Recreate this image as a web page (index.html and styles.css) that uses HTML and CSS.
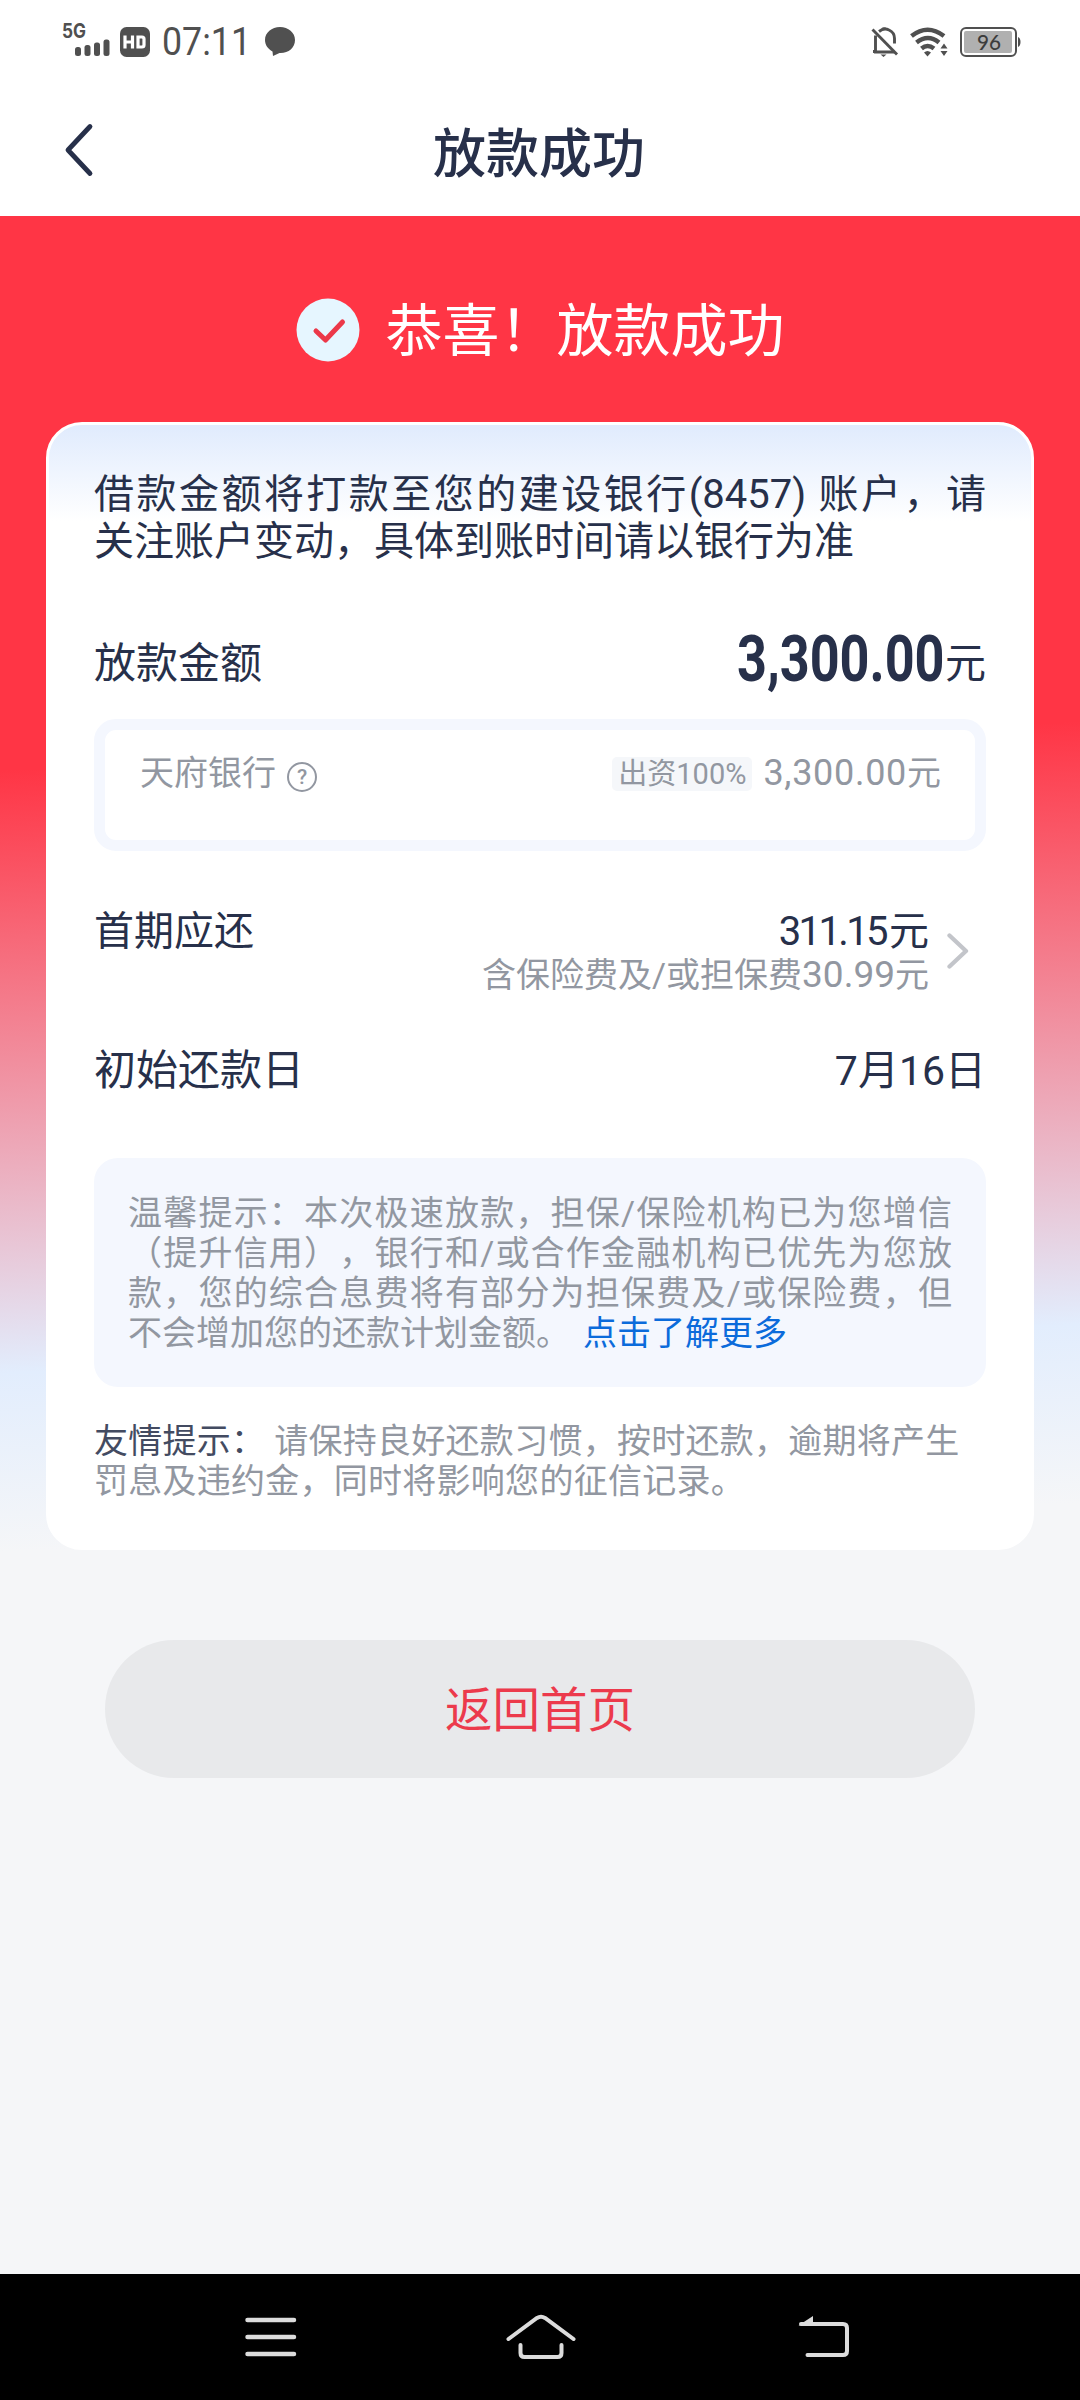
FILE: index.html
```html
<!DOCTYPE html>
<html lang="zh-CN">
<head>
<meta charset="utf-8">
<title>放款成功</title>
<link rel="stylesheet" href="styles.css">
</head>
<body>
<div class="screen">
  <header class="top">
    <div class="status">
      <div class="status-left">
        <svg class="signal" width="49" height="42" viewBox="0 -8 49 42"><text class="net" x="0" y="14" textLength="24" lengthAdjust="spacingAndGlyphs">5G</text><g fill="#505050"><rect x="13" y="23" width="6" height="9" rx="2.5"/><rect x="22.500" y="21" width="6" height="11" rx="2.500"/><rect x="32" y="18.500" width="6" height="13.500" rx="2.500"/><rect x="41.500" y="15.500" width="6" height="16.500" rx="2.500"/></g></svg>
        <svg class="hd" width="30" height="30" viewBox="0 0 30 30"><rect width="30" height="30" rx="6.500" fill="#505050"/><path d="M5 8.500v13M12.500 8.500v13M5 15h8M18 10v10h4q2 0 2-2v-6q0-2-2-2z" fill="none" stroke="#fff" stroke-width="3.200"/></svg>
        <div class="clock"><span class="clock-text">07:11</span></div>
        <svg class="bubble" width="30" height="30" viewBox="0 0 30 30"><path d="M15 0C6.700 0 0 5.600 0 13c0 5 3 9 7.500 11.500L8 29l6.500-3C23 26.500 30 21 30 13 30 5.600 23.300 0 15 0z" fill="#505050"/></svg>
      </div>
      <div class="status-right">
        <svg width="28" height="32" viewBox="0 0 28 32"><g fill="none" stroke="#505050" stroke-width="2.900"><path d="M1.500 3.500L26 28.500"/><path d="M4.500 9.500v16.500h19M2 25.500h3M8 5.500q5-4 10-1.500 5.500 2.500 5.500 8.500v5"/></g><path d="M10 2.500q3-2.500 6 0zM9.500 28.500h6l-3 2.500z" fill="#505050"/></svg>
        <svg class="wifi" width="40" height="30" viewBox="0 0 40 30"><g fill="none" stroke="#505050" stroke-width="4.500"><path d="M1.500 9Q17.500-3.500 34 9"/><path d="M6.500 15.500q11.500-9 22.500 0"/><path d="M11.500 21.500q6-5 12.500 0"/></g><path d="M14 25.500q3.500-3 7 0l-3.500 4z" fill="#505050"/><path d="M30.500 21.500l3.500-5 3.500 5zM30.500 24h7L34 29z" fill="#505050"/></svg>
        <svg class="battery" width="61" height="30" viewBox="0 0 61 30"><rect x="1" y="1" width="55" height="28" rx="5" fill="#fff" stroke="#505050" stroke-width="2"/><rect x="4" y="4" width="48" height="22" rx="2" fill="#b0b0b0"/><path d="M58 10q2.500 1 2.500 5T58 20z" fill="#505050"/><text class="level" x="17" y="22.800" textLength="24" lengthAdjust="spacingAndGlyphs">96</text></svg>
      </div>
    </div>
    <div class="bar">
      <svg class="back" width="30" height="54" viewBox="0 0 30 54"><path d="M26 3.500L4 27l22 23.500" fill="none" stroke="#27304a" stroke-width="4.800" stroke-linecap="round" stroke-linejoin="round"/></svg>
      <h1 class="title">放款成功</h1>
    </div>
  </header>

  <main class="content">
    <div class="success">
      <svg width="64" height="64" viewBox="0 0 64 64"><circle cx="32" cy="32" r="31.500" fill="#e6f6ff"/><path d="M20 33l9.500 9L46.500 24" fill="none" stroke="#ec3849" stroke-width="5" stroke-linecap="round" stroke-linejoin="round"/></svg>
      <span class="success-text">恭喜！放款成功</span>
    </div>

    <section class="card">
      <div class="notice">
        <div class="line full">借款金额将打款至您的建设银行(8457) 账户，请</div>
        <div class="line">关注账户变动，具体到账时间请以银行为准</div>
      </div>
      <div class="row amount-row">
        <span class="label">放款金额</span>
        <div class="amount"><div class="amount-box"><span class="amount-num">3,300.00</span></div><span class="unit">元</span></div>
      </div>
      <div class="funder">
        <span class="bank">天府银行</span>
        <svg class="help" width="32" height="32" viewBox="0 0 32 32"><circle cx="16" cy="16" r="14" fill="none" stroke="#9297a1" stroke-width="2"/><text class="q" x="16" y="23" text-anchor="middle">?</text></svg>
        <span class="tag">出资100%</span>
        <span class="part"><span class="part-num">3,300.00</span>元</span>
      </div>
      <div class="row first-row">
        <span class="label small">首期应还</span>
        <div class="first">
          <div class="first-sum"><span class="first-num">311.15</span>元</div>
          <div class="first-sub">含保险费及/或担保费<span class="sub-num">30.99</span>元</div>
        </div>
        <svg class="arrow" width="22" height="36" viewBox="0 0 22 36"><path d="M2.500 2.500L19 18 2.500 33.500" fill="none" stroke="#c3c5ca" stroke-width="4.300" stroke-linecap="round" stroke-linejoin="round"/></svg>
      </div>
      <div class="row date-row">
        <span class="label">初始还款日</span>
        <span class="date">7月16日</span>
      </div>
      <div class="tip">
        <div class="tip-line full">温馨提示：本次极速放款，担保/保险机构已为您增信</div>
        <div class="tip-line full">（提升信用），银行和/或合作金融机构已优先为您放</div>
        <div class="tip-line full">款，您的综合息费将有部分为担保费及/或保险费，但</div>
        <div class="tip-line">不会增加您的还款计划金额。<a class="more">点击了解更多</a></div>
      </div>
      <div class="friendly">
        <div class="tip-line"><span class="strong">友情提示：</span>请保持良好还款习惯，按时还款，逾期将产生</div>
        <div class="tip-line">罚息及违约金，同时将影响您的征信记录。</div>
      </div>
    </section>

    <button class="home">返回首页</button>
  </main>

  <nav class="nav">
    <svg width="52" height="44" viewBox="0 0 52 44"><path d="M2.500 5h46.500M2.500 22h46.500M2.500 39h46.500" stroke="#dcdcdc" stroke-width="4.500" stroke-linecap="round"/></svg>
    <svg class="nav-home" width="72" height="46" viewBox="0 0 72 46"><path d="M3.500 25L32 4q4-2.500 8 0L68.500 25M15.500 31v8q0 4 4 4h33q4 0 4-4v-8" fill="none" stroke="#dcdcdc" stroke-width="4" stroke-linecap="round"/></svg>
    <svg width="54" height="46" viewBox="0 0 54 46"><path d="M4 10h42q4 0 4 4v23q0 4-4 4H10.500" fill="none" stroke="#dcdcdc" stroke-width="4" stroke-linecap="round"/><path d="M1.500 11.500L16 2v9.500z" fill="#dcdcdc"/></svg>
  </nav>
</div>
</body>
</html>
```
FILE: styles.css
```css
* { box-sizing: border-box; }
body {
  margin: 0;
  font-family: Roboto, "Noto Sans CJK SC", sans-serif;
  color: #27304a;
  text-spacing-trim: space-all;
}
svg { display: block; flex: none; }
.screen {
  width: 1080px;
  height: 2400px;
  display: flex;
  flex-direction: column;
  background: #f5f6f8;
  overflow: hidden;
}
.top { height: 216px; background: #fff; flex: none; }
.status {
  height: 84px;
  padding: 0 59px 0 62px;
  display: flex;
  justify-content: space-between;
  align-items: center;
}
.status-left, .status-right { display: flex; align-items: center; }
.net { font: 700 20px Inter, sans-serif; fill: #505050; }
.signal { margin-bottom: 10px; }
.hd { margin-left: 9px; }
.clock { width: 90px; margin: 0 13px 0 12px; }
.clock-text {
  display: inline-block;
  transform: scaleX(0.94);
  transform-origin: left;
  font-size: 38px;
  line-height: 48px;
  color: #505050;
}
.wifi { margin-left: 11px; }
.battery { margin-left: 10px; }
.level { font: 500 22px Lato, sans-serif; fill: #3c3c3c; }
.bar {
  height: 132px;
  padding: 0 64px;
  display: grid;
  grid-template-columns: 30px 1fr 30px;
  align-items: center;
}
.title {
  margin: 9px 2px 0 0;
  text-align: center;
  font-size: 53px;
  line-height: 72px;
  font-weight: 500;
}
.content {
  flex: 1;
  padding: 82px 46px 0;
  background: linear-gradient(177.4deg, #ff3545 0, #ff3545 554px, #e2edfd 1156px, #f5f6f8 1335px);
}
.success {
  height: 64px;
  display: flex;
  justify-content: center;
  align-items: center;
  gap: 26px;
}
.success-text {
  padding-top: 4px;
  font-size: 57px;
  line-height: 64px;
  color: #fff;
}
.card {
  height: 1128px;
  margin-top: 60px;
  padding: 46px 45px 0;
  border: 3px solid #fff;
  border-radius: 36px;
  background: linear-gradient(#e0ebfd 0, #fff 96px);
}
.line { font-size: 40px; line-height: 47px; white-space: nowrap; }
.full { text-align: justify; text-align-last: justify; text-justify: inter-character; }
.row { display: flex; justify-content: space-between; }
.amount-row { height: 62px; margin-top: 68px; align-items: center; }
.label { font-size: 42px; line-height: 60px; }
.label.small { font-size: 40px; padding-top: 1px; }
.amount { display: flex; align-items: center; }
.amount-box { width: 208px; height: 72px; margin-top: -8px; }
.amount-num {
  display: inline-block;
  transform: scaleX(0.815);
  transform-origin: left;
  font-size: 64px;
  line-height: 72px;
  font-weight: 700;
}
.unit { font-size: 41px; line-height: 60px; }
.funder {
  height: 132px;
  margin-top: 24px;
  padding: 20px 34px 0 35px;
  border: 11px solid #f4f7fe;
  border-radius: 22px;
  background: #fff;
  display: flex;
  align-items: flex-start;
  color: #9297a1;
  font-size: 34px;
  line-height: 46px;
}
.help { margin: 11px 0 0 10px; }
.q { font: 500 21px Roboto, sans-serif; fill: #9297a1; }
.tag {
  height: 34px;
  margin: 7px 11px 0 auto;
  padding: 0 6px;
  border-radius: 5px;
  background: #f5f7fa;
  font-size: 29px;
  line-height: 34px;
}
.part-num { font-size: 36px; letter-spacing: 0.700px; }
.first-row { margin-top: 50px; height: 98px; }
.first { margin-left: auto; text-align: right; }
.first-sum { font-size: 40px; line-height: 62px; }
.first-num { letter-spacing: -2.600px; margin-right: 3px; }
.first-sub { font-size: 34px; line-height: 40px; color: #9297a1; margin-top: -8px; }
.sub-num { font-size: 37px; }
.arrow { margin: 32px 17px 0 18px; }
.date-row { margin-top: 42px; height: 59px; }
.date { font-size: 41px; line-height: 60px; }
.tip {
  height: 229px;
  margin-top: 58px;
  padding: 35px 34px 0 34px;
  border-radius: 24px;
  background: #f4f7fe;
  color: #9297a1;
}
.tip-line { font-size: 34px; line-height: 40px; white-space: nowrap; }
.more { margin-left: 13px; color: #0b6bdb; }
.friendly { margin-top: 34px; color: #9297a1; letter-spacing: 0.260px; }
.strong { color: #434b61; margin-right: 9px; }
.home {
  display: block;
  width: 870px;
  height: 138px;
  margin: 90px auto 0;
  padding: 3px 0 0;
  border: 0;
  border-radius: 69px;
  background: #e8e9eb;
  color: #ec3a4c;
  font: 400 47.500px/60px Roboto, "Noto Sans CJK SC", sans-serif;
}
.nav {
  height: 126px;
  flex: none;
  padding: 0 229px 0 245px;
  background: #000;
  display: flex;
  justify-content: space-between;
  align-items: center;
}
.nav-home { margin-right: 12px; }
```
